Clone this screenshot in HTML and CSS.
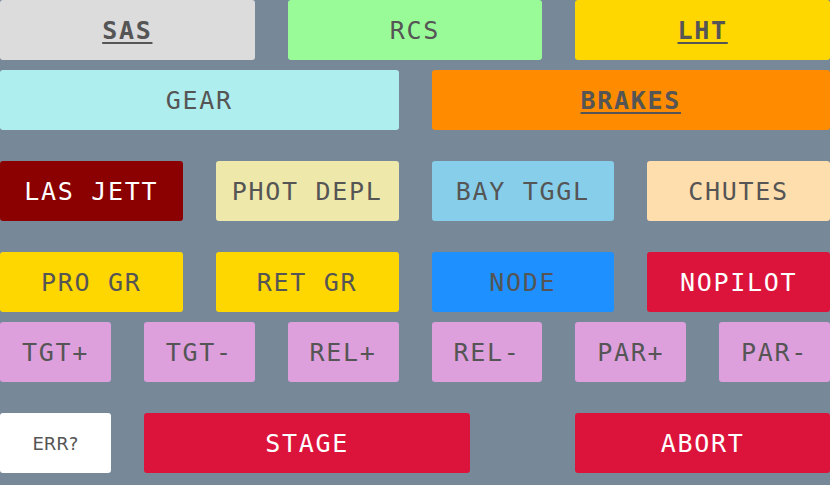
FILE: index.html
```html
<!DOCTYPE html>
<html lang="en">
<head>
    <meta charset="UTF-8">
    <meta name="viewport" content="width=device-width, initial-scale=1.0">
    <title>Control Panel</title>
    <link rel="stylesheet" href="styles.css">
</head>
<body>
    <div class="panel">
        <div class="group">
            <div class="row">
                <div class="btn span4 sas active">SAS</div>
                <div class="btn span4 rcs">RCS</div>
                <div class="btn span4 lht active">LHT</div>
            </div>
            <div class="row">
                <div class="btn span6 gear">GEAR</div>
                <div class="btn span6 brakes active">BRAKES</div>
            </div>
        </div>
        <div class="group">
            <div class="row">
                <div class="btn span3 las light">LAS JETT</div>
                <div class="btn span3 phot">PHOT DEPL</div>
                <div class="btn span3 bay">BAY TGGL</div>
                <div class="btn span3 chutes">CHUTES</div>
            </div>
        </div>
        <div class="group">
            <div class="row">
                <div class="btn span3 gr">PRO GR</div>
                <div class="btn span3 gr">RET GR</div>
                <div class="btn span3 node">NODE</div>
                <div class="btn span3 red light">NOPILOT</div>
            </div>
            <div class="row">
                <div class="btn span2 tgt">TGT+</div>
                <div class="btn span2 tgt">TGT-</div>
                <div class="btn span2 tgt">REL+</div>
                <div class="btn span2 tgt">REL-</div>
                <div class="btn span2 tgt">PAR+</div>
                <div class="btn span2 tgt">PAR-</div>
            </div>
        </div>
        <div class="group">
            <div class="row">
                <div class="btn span2 err">ERR?</div>
                <div class="btn span5 red light">STAGE</div>
                <div class="btn span4 start9 red light">ABORT</div>
            </div>
        </div>
    </div>
</body>
</html>
```

FILE: styles.css
```css
body {
    margin: 0;
    background-color: #778899;
    font-family: "DejaVu Sans Mono", monospace;
}
.panel {
    display: flex;
    flex-direction: column;
    gap: 31px;
    width: 830px;
}
.group {
    display: flex;
    flex-direction: column;
    gap: 10px;
}
.row {
    display: grid;
    grid-template-columns: repeat(12, 1fr);
    column-gap: 33px;
}
.btn {
    height: 60px;
    display: flex;
    justify-content: center;
    align-items: center;
    border-radius: 3px;
    font-size: 25px;
    letter-spacing: 1.7px;
    color: #555;
}
.span2 { grid-column: span 2; }
.span3 { grid-column: span 3; }
.span4 { grid-column: span 4; }
.span5 { grid-column: span 5; }
.span6 { grid-column: span 6; }
.start9 { grid-column: 9 / span 4; }

.active {
    font-weight: bold;
    text-decoration: underline;
    text-underline-offset: 3px;
}
.light { color: #fff; }

.sas { background-color: #dcdcdc; }
.rcs { background-color: #98fb98; }
.lht { background-color: #ffd700; }
.gear { background-color: #afeeee; }
.brakes { background-color: #ff8c00; }
.las { background-color: #8b0000; }
.phot { background-color: #eee8aa; }
.bay { background-color: #87ceeb; }
.chutes { background-color: #ffdead; }
.gr { background-color: #ffd700; }
.node { background-color: #1e90ff; }
.red { background-color: #dc143c; }
.tgt { background-color: #dda0dd; }
.err {
    background-color: #fff;
    font-family: "DejaVu Sans", sans-serif;
    font-size: 18px;
    letter-spacing: 0;
}
```
